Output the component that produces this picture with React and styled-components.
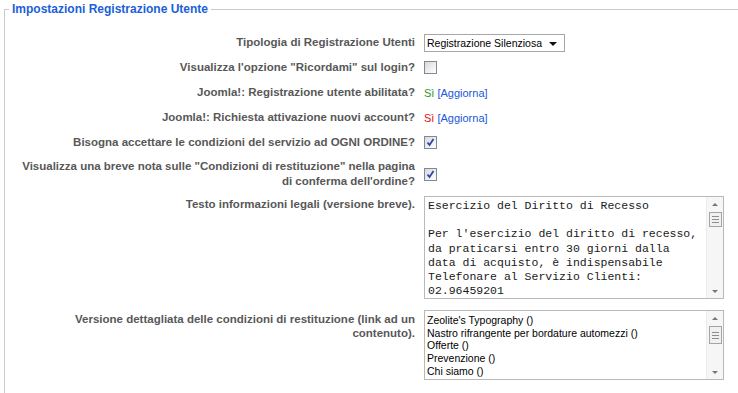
import React from 'react';
import styled, { createGlobalStyle } from 'styled-components';

const GlobalStyle = createGlobalStyle`
    body {
        margin: 0;
        background: #fff;
        overflow: hidden;
        font-family: "Liberation Sans", Arial, sans-serif;
    }
`

const Fieldset = styled.fieldset`
    margin: 2px 0 0 4px;
    width: 800px;
    min-height: 420px;
    padding: 14px 0 0 4px;
    border: 1px solid #cbcbcb;
    box-sizing: border-box;
`

const Legend = styled.legend`
    padding: 0 3px;
    font-size: 12px;
    line-height: 14px;
    font-weight: bold;
    color: #1b5fd9;
`

const Row = styled.div`
    display: grid;
    grid-template-columns: 406px 300px;
    column-gap: 9px;
    align-items: ${props => props.$top ? 'start' : 'center'};
    min-height: 25px;
    box-sizing: border-box;
    padding: ${props => props.$pad || '0'};
`

const Label = styled.div`
    text-align: right;
    font-size: 11.5px;
    line-height: ${props => props.$lh || 15}px;
    font-weight: bold;
    color: #585858;
    padding-top: ${props => props.$offset || 0}px;
`

const Control = styled.div`
    display: flex;
    align-items: center;
    font-size: 11px;
`

const SelectBox = styled.div`
    position: relative;
    width: 141px;
    height: 18px;
    border: 1px solid #a7a7a7;
    box-sizing: border-box;
    background: #fff;

    &::after {
        content: '';
        position: absolute;
        right: 7px;
        top: 7px;
        border-left: 4px solid transparent;
        border-right: 4px solid transparent;
        border-top: 4px solid #111;
    }
`

const Select = styled.select`
    appearance: none;
    width: 100%;
    height: 100%;
    border: none;
    background: transparent;
    padding: 0 0 0 2px;
    font-family: "Liberation Sans", Arial, sans-serif;
    font-size: 10.5px;
    color: #000;
    outline: none;
`

const Box = styled.span`
    display: inline-flex;
    align-items: center;
    justify-content: center;
    width: 13px;
    height: 13px;
    box-sizing: border-box;
    border: 1px solid #7f8a96;
    background: linear-gradient(135deg, #d9d9d9 0%, #f4f4f4 70%, #fff 100%);
`

const Yes = styled.span`
    color: ${props => props.$color};
    margin-right: 3px;
`

const Link = styled.a`
    color: #2058d8;
    text-decoration: none;
`

const Frame = styled.div`
    display: flex;
    width: 300px;
    height: ${props => props.$h}px;
    border: 1px solid #b9b9b9;
    box-sizing: border-box;
    background: #fff;
`

const Mono = styled.div`
    flex: 1;
    padding: 2px 3px;
    font-family: "Liberation Mono", "Courier New", monospace;
    font-size: 11.5px;
    line-height: 14.2px;
    color: #1a1a1a;
    white-space: pre-wrap;
`

const List = styled.div`
    flex: 1;
    padding: 3px 2px;
    font-size: 10.5px;
    line-height: 12.7px;
    color: #000;
`

const Scrollbar = styled.div`
    width: 16px;
    display: flex;
    flex-direction: column;
    align-items: center;
    border-left: 1px solid #ececec;
    background: #f6f6f6;
`

const Arrow = styled.div`
    flex: ${props => props.$down ? '1' : 'none'};
    display: flex;
    justify-content: center;
    align-items: ${props => props.$down ? 'flex-end' : 'center'};
    height: 15px;
    padding-bottom: ${props => props.$down ? '5px' : '0'};
    width: 100%;
    box-sizing: border-box;

    &::before {
        content: '';
        border-left: 3px solid transparent;
        border-right: 3px solid transparent;
        ${props => props.$down ? 'border-top: 3px solid #777;' : 'border-bottom: 3px solid #777;'}
    }
`

const Thumb = styled.div`
    width: 13px;
    height: ${props => props.$h}px;
    box-sizing: border-box;
    border: 1px solid #a4a4a4;
    background: #f0f0f0;
    display: flex;
    flex-direction: column;
    justify-content: center;
    align-items: center;
    gap: 2px;

    span {
        display: block;
        width: 7px;
        height: 1px;
        background: #8d8d8d;
    }
`

function Checkbox({ checked })
{
    return (
        <Box>
            {checked && (
                <svg width="9" height="9" viewBox="0 0 9 9">
                    <path d="M1.5 4.5 L3.5 7 L7.5 1" fill="none" stroke="#2f44a8" strokeWidth="1.8" />
                </svg>
            )}
        </Box>
    )
}

function Bar({ thumb })
{
    return (
        <Scrollbar>
            <Arrow />
            <Thumb $h={thumb}><span /><span /><span /></Thumb>
            <Arrow $down />
        </Scrollbar>
    )
}

const legalText = `Esercizio del Diritto di Recesso

Per l'esercizio del diritto di recesso, da praticarsi entro 30 giorni dalla data di acquisto, è indispensabile Telefonare al Servizio Clienti: 02.96459201`

const articles = [
    "Zeolite's Typography ()",
    'Nastro rifrangente per bordature automezzi ()',
    'Offerte ()',
    'Prevenzione ()',
    'Chi siamo ()',
]

export default function App()
{
    return (
        <>
            <GlobalStyle />
            <Fieldset>
                <Legend>Impostazioni Registrazione Utente</Legend>
                <Row>
                    <Label>Tipologia di Registrazione Utenti</Label>
                    <Control>
                        <SelectBox>
                            <Select defaultValue="silent">
                                <option value="silent">Registrazione Silenziosa</option>
                                <option value="normal">Registrazione Normale</option>
                            </Select>
                        </SelectBox>
                    </Control>
                </Row>
                <Row>
                    <Label>Visualizza l'opzione "Ricordami" sul login?</Label>
                    <Control><Checkbox /></Control>
                </Row>
                <Row>
                    <Label>Joomla!: Registrazione utente abilitata?</Label>
                    <Control><Yes $color="#2c9a1c">Sì</Yes><Link href="#">[Aggiorna]</Link></Control>
                </Row>
                <Row>
                    <Label>Joomla!: Richiesta attivazione nuovi account?</Label>
                    <Control><Yes $color="#e3100e">Sì</Yes><Link href="#">[Aggiorna]</Link></Control>
                </Row>
                <Row>
                    <Label>Bisogna accettare le condizioni del servizio ad OGNI ORDINE?</Label>
                    <Control><Checkbox checked /></Control>
                </Row>
                <Row $pad="4px 0">
                    <Label>Visualizza una breve nota sulle "Condizioni di restituzione" nella pagina<br />di conferma dell'ordine?</Label>
                    <Control><Checkbox checked /></Control>
                </Row>
                <Row $top $pad="3px 0 0">
                    <Label $offset={1}>Testo informazioni legali (versione breve).</Label>
                    <Frame $h={103}>
                        <Mono>{legalText}</Mono>
                        <Bar thumb={15} />
                    </Frame>
                </Row>
                <Row $top $pad="11px 0 0">
                    <Label $lh={14} $offset={2}>Versione dettagliata delle condizioni di restituzione (link ad un<br />contenuto).</Label>
                    <Frame $h={70}>
                        <List>
                            {articles.map(item => <div key={item}>{item}</div>)}
                        </List>
                        <Bar thumb={18} />
                    </Frame>
                </Row>
            </Fieldset>
        </>
    )
}
